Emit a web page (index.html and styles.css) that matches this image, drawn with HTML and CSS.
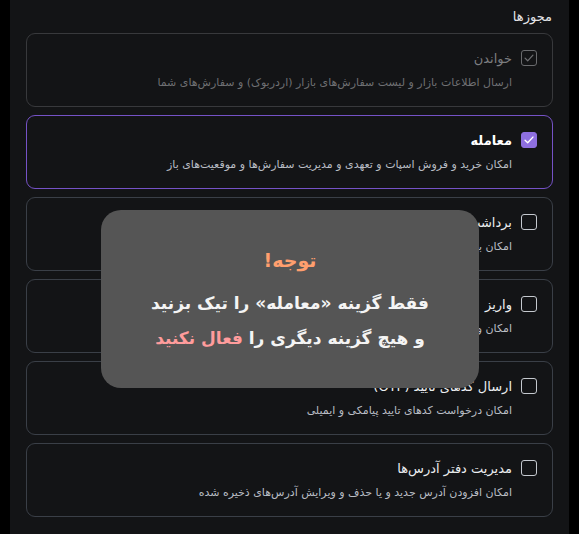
FILE: index.html
```html
<!DOCTYPE html>
<html lang="fa" dir="rtl">
<head>
<meta charset="utf-8">
<link rel="stylesheet" href="styles.css">
</head>
<body>
<div class="page">
  <div class="panel">
    <div class="heading">مجوزها</div>
    <div class="list">
      <div class="card disabled">
        <span class="box checked-gray"><svg viewBox="0 0 16 16"><path d="M3.5 8.2l3 3 6-6.5" /></svg></span>
        <div class="txt">
          <div class="title">خواندن</div>
          <div class="desc">ارسال اطلاعات بازار و لیست سفارش‌های بازار (اردربوک) و سفارش‌های شما</div>
        </div>
      </div>
      <div class="card active">
        <span class="box checked"><svg viewBox="0 0 16 16"><path d="M3.5 8.2l3 3 6-6.5" /></svg></span>
        <div class="txt">
          <div class="title bold">معامله</div>
          <div class="desc">امکان خرید و فروش اسپات و تعهدی و مدیریت سفارش‌ها و موقعیت‌های باز</div>
        </div>
      </div>
      <div class="card">
        <span class="box"></span>
        <div class="txt">
          <div class="title">برداشت</div>
          <div class="desc">امکان برداشت دارایی‌ها از حساب</div>
        </div>
      </div>
      <div class="card">
        <span class="box"></span>
        <div class="txt">
          <div class="title">واریز</div>
          <div class="desc">امکان واریز دارایی به حساب</div>
        </div>
      </div>
      <div class="card">
        <span class="box"></span>
        <div class="txt">
          <div class="title">ارسال کدهای تایید (OTP)</div>
          <div class="desc">امکان درخواست کدهای تایید پیامکی و ایمیلی</div>
        </div>
      </div>
      <div class="card">
        <span class="box"></span>
        <div class="txt">
          <div class="title">مدیریت دفتر آدرس‌ها</div>
          <div class="desc">امکان افزودن آدرس جدید و یا حذف و ویرایش آدرس‌های ذخیره شده</div>
        </div>
      </div>
    </div>
  </div>
  <div class="notice">
    <div class="notice-title">توجه!</div>
    <div class="notice-line">فقط گزینه «معامله» را تیک بزنید</div>
    <div class="notice-line">و هیچ گزینه دیگری را <span class="pink">فعال نکنید</span></div>
  </div>
</div>
</body>
</html>
```

FILE: styles.css
```css
html, body {
  margin: 0;
  padding: 0;
  background: #000;
}
body {
  width: 579px;
  height: 534px;
  overflow: hidden;
  font-family: "DejaVu Sans", "Noto Sans", sans-serif;
}
.page {
  position: relative;
  width: 579px;
  height: 534px;
  padding: 0 10px;
  box-sizing: border-box;
}
.panel {
  background: #131416;
  height: 534px;
  padding: 7px 16px 0;
  box-sizing: border-box;
}
.heading {
  color: #e6e7ea;
  font-size: 13px;
  line-height: 20px;
  height: 26px;
  padding-right: 1px;
}
.list {
  display: flex;
  flex-direction: column;
  gap: 8px;
}
.card {
  display: flex;
  align-items: flex-start;
  gap: 9px;
  border: 1px solid #3a3f47;
  border-radius: 9px;
  height: 74px;
  box-sizing: border-box;
  padding: 15px 15px 0;
}
.card.disabled {
  border-color: #38393c;
}
.card.active {
  border-color: #7552c6;
}
.box {
  width: 16px;
  height: 16px;
  box-sizing: border-box;
  border: 1.5px solid #c5c9cf;
  border-radius: 3px;
  margin-top: 1px;
  flex: none;
  display: flex;
  align-items: center;
  justify-content: center;
}
.box svg {
  width: 14px;
  height: 14px;
  fill: none;
  stroke-width: 1.4;
  stroke-linecap: round;
  stroke-linejoin: round;
}
.box.checked-gray {
  border-color: #6a6b6e;
}
.box.checked-gray svg { stroke: #6f7073; }
.box.checked {
  background: #8e6fe0;
  border-color: #8e6fe0;
}
.box.checked svg { stroke: #fff; stroke-width: 1.6; }
.txt {
  display: flex;
  flex-direction: column;
  gap: 4px;
}
.title {
  color: #eceef1;
  font-size: 13px;
  line-height: 20px;
}
.title.bold { font-weight: bold; color: #fff; }
.desc {
  color: #b9bdc4;
  font-size: 11px;
  line-height: 20px;
}
.disabled .title { color: #7d7e81; }
.disabled .desc { color: #6f7073; }
.notice {
  position: absolute;
  left: 101px;
  top: 210px;
  width: 378px;
  height: 178px;
  background: #555555;
  border-radius: 20px;
  display: flex;
  flex-direction: column;
  align-items: center;
  padding-top: 36px;
  box-sizing: border-box;
  font-weight: bold;
}
.notice-title {
  color: #ff9f6e;
  font-size: 19px;
  line-height: 28px;
  margin-bottom: 12px;
}
.notice-line {
  color: #f4f4f4;
  font-size: 17px;
  line-height: 35px;
}
.pink { color: #ff9c9c; }
```
